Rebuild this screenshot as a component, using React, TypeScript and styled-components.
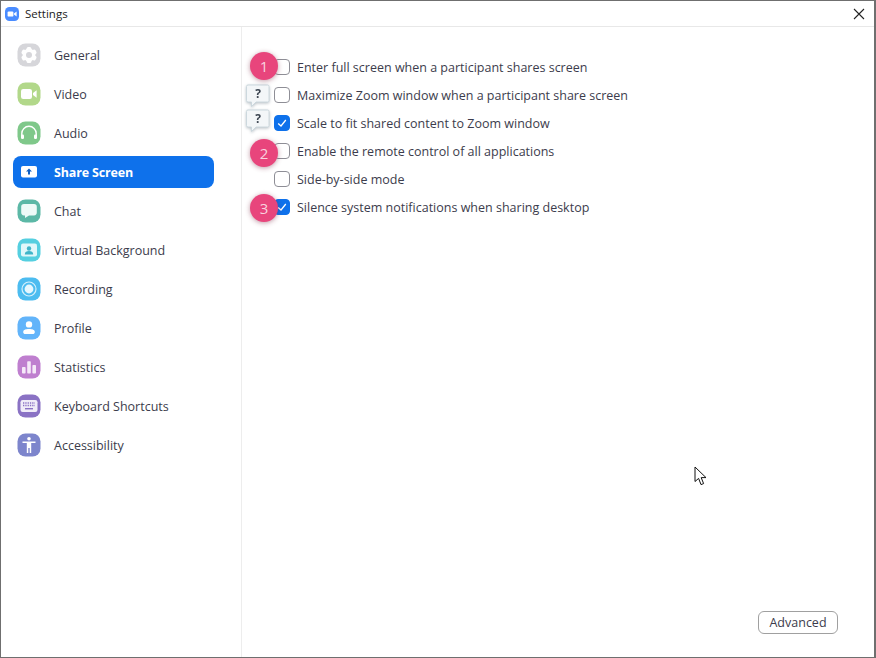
import React from "react";
import styled, { createGlobalStyle } from "styled-components";

const Global = createGlobalStyle`
  html, body { margin: 0; padding: 0; background: #fff; }
  * { box-sizing: border-box; }
`;

const Win = styled.div`
  position: relative;
  width: 876px;
  height: 658px;
  border: 1px solid #6f6f6f;
  border-right-width: 2px;
  background: #fff;
  display: flex;
  flex-direction: column;
  font-family: "Open Sans", "Noto Sans", sans-serif;
  color: #3a3a48;
  overflow: hidden;
`;
const TitleBar = styled.div`
  height: 26px;
  flex: none;
  display: flex;
  align-items: center;
  padding: 0 9px 0 3px;
  border-bottom: 1px solid #e8e8e8;
  font-size: 11.5px;
  color: #222;
  gap: 5px;
`;
const TitleText = styled.span`
  flex: 1;
`;
const Body = styled.div`
  flex: 1;
  display: flex;
  min-height: 0;
`;
const Sidebar = styled.nav`
  width: 241px;
  flex: none;
  border-right: 1px solid #ededed;
  padding: 12px 0 0 12px;
  display: flex;
  flex-direction: column;
  gap: 7px;
`;
const NavRow = styled.div<{ $active?: boolean }>`
  width: 201px;
  height: 32px;
  border-radius: 8px;
  padding-left: 4px;
  display: flex;
  align-items: center;
  gap: 13px;
  font-size: 12.5px;
  letter-spacing: ${(p) => (p.$active ? "-0.16px" : "0")};
  font-weight: ${(p) => (p.$active ? 700 : 400)};
  color: ${(p) => (p.$active ? "#fff" : "#3c3c4c")};
  background: ${(p) => (p.$active ? "#0e71eb" : "transparent")};
`;
const IconSlot = styled.svg`
  width: 24px;
  height: 24px;
  flex: none;
`;
const Main = styled.main`
  flex: 1;
  display: flex;
  flex-direction: column;
  padding: 26px 36px 23px 32px;
`;
const Option = styled.label`
  height: 28px;
  display: flex;
  align-items: center;
  gap: 7px;
  font-size: 12.5px;
  color: #3c3c4c;
`;
const Box = styled.span<{ $checked?: boolean }>`
  width: 16px;
  height: 16px;
  flex: none;
  border-radius: 4px;
  border: 1px solid ${(p) => (p.$checked ? "#0e71eb" : "#8e8e96")};
  background: ${(p) => (p.$checked ? "#0e71eb" : "#fff")};
  display: flex;
  align-items: center;
  justify-content: center;
`;
const AdvancedBtn = styled.button`
  margin-top: auto;
  align-self: flex-end;
  width: 80px;
  height: 23px;
  border: 1px solid #a0a0a0;
  border-radius: 6px;
  background: #fff;
  color: #3c3c4c;
  font: 12.5px "Open Sans", "Noto Sans", sans-serif;
  padding: 0;
`;
const Badge = styled.div<{ $x: number; $y: number }>`
  position: absolute;
  left: ${(p) => p.$x}px;
  top: ${(p) => p.$y}px;
  width: 28px;
  height: 28px;
  border-radius: 50%;
  background: #e8457c;
  box-shadow: 0 1px 5px rgba(120, 30, 60, 0.45);
  color: #f8d3df;
  font-size: 15px;
  display: flex;
  align-items: center;
  justify-content: center;
`;
const Bubble = styled.div<{ $x: number; $y: number }>`
  position: absolute;
  left: ${(p) => p.$x}px;
  top: ${(p) => p.$y}px;
  width: 24px;
  height: 24px;
  filter: drop-shadow(0 1px 1.5px rgba(60, 80, 95, 0.35));
`;
const BubbleMark = styled.span`
  position: absolute;
  left: 0;
  right: 0;
  top: 0;
  height: 19px;
  line-height: 19px;
  text-align: center;
  font-size: 12px;
  font-weight: 700;
  color: #3b4450;
`;
const Cursor = styled.svg`
  position: absolute;
  left: 693px;
  top: 465px;
  width: 14px;
  height: 20px;
`;

const Icon = ({ bg, children }: { bg: string; children?: React.ReactNode }) => (
  <IconSlot viewBox="0 0 24 24">
    <rect x="0.5" y="0.5" width="23" height="23" rx="8" fill={bg} />
    {children}
  </IconSlot>
);

const gearTeeth = [0, 60, 120].map((a) => (
  <rect key={a} x="9.6" y="4" width="4.8" height="16" rx="1.6" fill="#fff" transform={`rotate(${a} 12 12)`} />
));

const items: { label: string; icon: React.ReactNode; active?: boolean }[] = [
  {
    label: "General",
    icon: (
      <Icon bg="#d6d6da">
        <circle cx="12" cy="12" r="6.4" fill="#fff" />
        {gearTeeth}
        <circle cx="12" cy="12" r="3" fill="#d6d6da" />
      </Icon>
    ),
  },
  {
    label: "Video",
    icon: (
      <Icon bg="#b2d88a">
        <rect x="4" y="7" width="11" height="10" rx="2.2" fill="#fff" />
        <path d="M16 11 L19.6 8.2 V15.8 L16 13 Z" fill="#fff" />
      </Icon>
    ),
  },
  {
    label: "Audio",
    icon: (
      <Icon bg="#7fc88a">
        <path d="M4.8 16 V12.5 a7.2 7.2 0 0 1 14.4 0 V16" fill="none" stroke="#fff" strokeWidth="1.4" />
        <rect x="4" y="13.5" width="3" height="4.6" rx="1.3" fill="#fff" />
        <rect x="17" y="13.5" width="3" height="4.6" rx="1.3" fill="#fff" />
      </Icon>
    ),
  },
  {
    label: "Share Screen",
    active: true,
    icon: (
      <IconSlot viewBox="0 0 24 24">
        <rect x="4" y="6" width="16" height="11.5" rx="2" fill="#fff" />
        <path d="M12 8.6 L15 11.6 H13 V14.6 H11 V11.6 H9 Z" fill="#0e5fc4" />
      </IconSlot>
    ),
  },
  {
    label: "Chat",
    icon: (
      <Icon bg="#5cb8a6">
        <path d="M7 5 H17 a2.8 2.8 0 0 1 2.8 2.8 V13.6 a2.8 2.8 0 0 1 -2.8 2.8 H12 L8 19 V16.4 H7 a2.8 2.8 0 0 1 -2.8 -2.8 V7.8 A2.8 2.8 0 0 1 7 5 Z" fill="#eefaf7" />
      </Icon>
    ),
  },
  {
    label: "Virtual Background",
    icon: (
      <Icon bg="#55cfe0">
        <rect x="4" y="5.5" width="16" height="13" rx="2" fill="#e0f7fa" />
        <circle cx="12" cy="10.5" r="2.2" fill="#3fb4c8" />
        <path d="M7.8 16.5 c0 -2.6 1.8 -3.4 4.2 -3.4 s4.2 .8 4.2 3.4 Z" fill="#3fb4c8" />
      </Icon>
    ),
  },
  {
    label: "Recording",
    icon: (
      <Icon bg="#4cbcf0">
        <circle cx="12" cy="12" r="7" fill="none" stroke="#d5f0fc" strokeWidth="1.2" />
        <circle cx="12" cy="12" r="4.4" fill="#e6f7fe" />
      </Icon>
    ),
  },
  {
    label: "Profile",
    icon: (
      <Icon bg="#62b4fa">
        <circle cx="12" cy="8.4" r="3.2" fill="#fff" />
        <path d="M6.2 16 c0 -2.2 2.6 -3 5.8 -3 s5.8 .8 5.8 3 c0 1.4 -1 2 -2 2 H8.2 c-1 0 -2 -.6 -2 -2 Z" fill="#fff" />
      </Icon>
    ),
  },
  {
    label: "Statistics",
    icon: (
      <Icon bg="#bf7fcf">
        <rect x="5" y="12" width="3.6" height="6.5" rx="0.8" fill="#f5e9f8" />
        <rect x="10.2" y="6.2" width="3.6" height="12.3" rx="0.8" fill="#f5e9f8" />
        <rect x="15.4" y="10" width="3.6" height="8.5" rx="0.8" fill="#f5e9f8" />
      </Icon>
    ),
  },
  {
    label: "Keyboard Shortcuts",
    icon: (
      <Icon bg="#8a72c4">
        <rect x="3.5" y="6" width="17" height="12" rx="2.2" fill="#f0ecf8" />
        <path d="M6 9 H18 M6 11.5 H18" stroke="#8a72c4" strokeWidth="1.3" strokeDasharray="1.3 1" />
        <rect x="8" y="14" width="8" height="1.4" fill="#8a72c4" />
      </Icon>
    ),
  },
  {
    label: "Accessibility",
    icon: (
      <Icon bg="#7d85cc">
        <circle cx="12" cy="5.8" r="1.8" fill="#fff" />
        <path d="M5.5 8.4 H18.5 V10 H14.2 V20 H12.7 V15 H11.3 V20 H9.8 V10 H5.5 Z" fill="#fff" />
      </Icon>
    ),
  },
];

const options = [
  { text: "Enter full screen when a participant shares screen" },
  { text: "Maximize Zoom window when a participant share screen" },
  { text: "Scale to fit shared content to Zoom window", checked: true },
  { text: "Enable the remote control of all applications" },
  { text: "Side-by-side mode" },
  { text: "Silence system notifications when sharing desktop", checked: true },
];

const HelpBubble = ({ x, y }: { x: number; y: number }) => (
  <Bubble $x={x} $y={y}>
    <svg width="24" height="24" viewBox="0 0 24 24">
      <path
        d="M2 1 H21.5 a1.5 1.5 0 0 1 1.5 1.5 V16.5 a1.5 1.5 0 0 1 -1.5 1.5 H10 L5.5 22.5 V18 H2 a1.5 1.5 0 0 1 -1.5 -1.5 V2.5 A1.5 1.5 0 0 1 2 1 Z"
        fill="#f3f6f8"
        stroke="#ccd8de"
        strokeWidth="1"
      />
    </svg>
    <BubbleMark>?</BubbleMark>
  </Bubble>
);

export default function App() {
  return (
    <Win>
      <Global />
      <TitleBar>
        <svg width="16" height="16" viewBox="0 0 16 16">
          <rect x="1" y="1" width="14" height="14" rx="4.5" fill="#4a8cff" />
          <rect x="3.6" y="5.4" width="5.8" height="5.2" rx="1.2" fill="#fff" />
          <path d="M10 7.5 L12.6 5.6 V10.4 L10 8.5 Z" fill="#fff" />
        </svg>
        <TitleText>Settings</TitleText>
        <svg width="12" height="12" viewBox="0 0 12 12">
          <path d="M1 1 L11 11 M11 1 L1 11" stroke="#222" strokeWidth="1.1" />
        </svg>
      </TitleBar>
      <Body>
        <Sidebar>
          {items.map((it) => (
            <NavRow key={it.label} $active={it.active}>
              {it.icon}
              {it.label}
            </NavRow>
          ))}
        </Sidebar>
        <Main>
          {options.map((o) => (
            <Option key={o.text}>
              <Box $checked={o.checked}>
                {o.checked && (
                  <svg width="10" height="10" viewBox="0 0 10 10">
                    <path d="M1.2 5.4 L4 8 L8.8 2" fill="none" stroke="#fff" strokeWidth="1.3" />
                  </svg>
                )}
              </Box>
              {o.text}
            </Option>
          ))}
          <AdvancedBtn>Advanced</AdvancedBtn>
        </Main>
      </Body>
      <HelpBubble x={245} y={83} />
      <HelpBubble x={245} y={108} />
      <Badge $x={249} $y={51}>1</Badge>
      <Badge $x={249} $y={138}>2</Badge>
      <Badge $x={249} $y={193}>3</Badge>
      <Cursor viewBox="0 0 14 20">
        <path d="M1 1 V15.5 L4.6 12.4 L7 18.6 L9.6 17.6 L7.2 11.6 H12 Z" fill="#fff" stroke="#111" strokeWidth="1" />
      </Cursor>
    </Win>
  );
}
